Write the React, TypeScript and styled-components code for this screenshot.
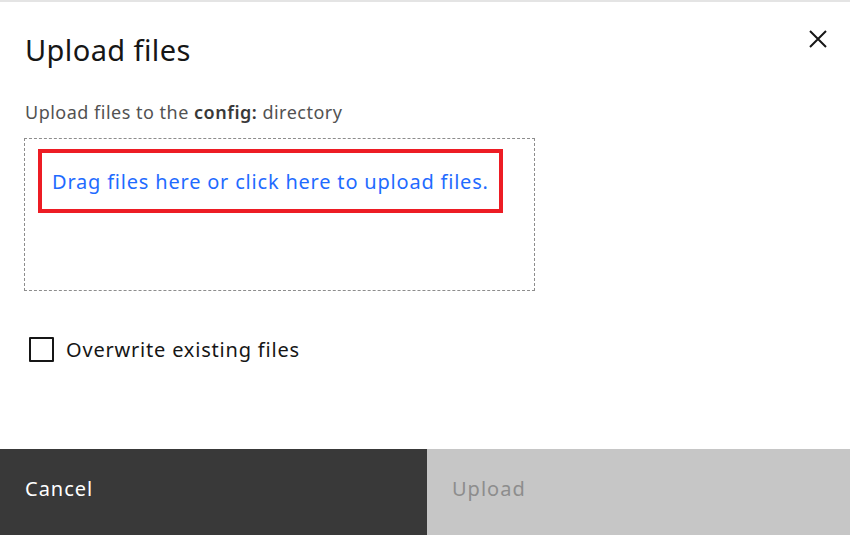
import styled, { createGlobalStyle } from "styled-components";

const GlobalStyle = createGlobalStyle`
  html, body {
    margin: 0;
    padding: 0;
    background: #ffffff;
  }
  body {
    font-family: "Noto Sans", "Open Sans", sans-serif;
  }
`;

const Modal = styled.div`
  width: 850px;
  height: 535px;
  box-sizing: border-box;
  border-top: 2px solid #e4e4e4;
  display: flex;
  flex-direction: column;
  background: #ffffff;
`;

const Header = styled.div`
  display: flex;
  justify-content: space-between;
  align-items: flex-start;
  padding: 28px 20px 0 25px;
`;

const Title = styled.h2`
  margin: 0;
  font-size: 29px;
  line-height: 40px;
  font-weight: 400;
  letter-spacing: 0.4px;
  color: #161616;
`;

const CloseButton = styled.button`
  border: none;
  background: none;
  padding: 0;
  margin-top: -3px;
  width: 24px;
  height: 24px;
  display: flex;
  align-items: center;
  justify-content: center;
  cursor: pointer;
`;

const Body = styled.div`
  flex: 1;
  padding: 0 25px 0 24px;
  display: flex;
  flex-direction: column;
`;

const Description = styled.p`
  margin: 30px 0 0 1px;
  font-size: 18px;
  line-height: 24px;
  letter-spacing: 0.5px;
  color: #525252;
  strong {
    font-weight: 600;
    color: #393939;
  }
`;

const DropZone = styled.div`
  margin-top: 14px;
  width: 511px;
  height: 153px;
  box-sizing: border-box;
  border: 1px dashed #8d8d8d;
  padding: 10px 0 0 13px;
`;

const Highlight = styled.div`
  width: 465px;
  height: 64px;
  box-sizing: border-box;
  border: 4px solid #ed1c24;
  display: flex;
  align-items: center;
  padding-left: 10px;
`;

const UploadLink = styled.span`
  font-size: 20px;
  letter-spacing: 0.8px;
  color: #1f6bff;
  cursor: pointer;
  white-space: nowrap;
`;

const CheckboxRow = styled.label`
  margin: 45px 0 0 5px;
  display: flex;
  align-items: center;
  gap: 12px;
  cursor: pointer;
`;

const Box = styled.span`
  width: 25px;
  height: 25px;
  box-sizing: border-box;
  border: 2px solid #161616;
  border-radius: 1px;
`;

const CheckLabel = styled.span`
  font-size: 20px;
  letter-spacing: 0.8px;
  color: #161616;
`;

const Footer = styled.div`
  height: 86px;
  display: grid;
  grid-template-columns: 427px 1fr;
`;

const FooterButton = styled.button<{ $primary?: boolean }>`
  border: none;
  margin: 0;
  padding: 28px 25px 0;
  text-align: left;
  align-self: stretch;
  display: flex;
  align-items: flex-start;
  font-family: inherit;
  font-size: 20px;
  line-height: 24px;
  letter-spacing: 1px;
  background: ${(p) => (p.$primary ? "#c6c6c6" : "#393939")};
  color: ${(p) => (p.$primary ? "#8d8d8d" : "#ffffff")};
  cursor: ${(p) => (p.$primary ? "not-allowed" : "pointer")};
`;

const App = () => {
  return (
    <>
      <GlobalStyle />
      <Modal>
        <Header>
          <Title>Upload files</Title>
          <CloseButton aria-label="Close">
            <svg width="22" height="22" viewBox="0 0 22 22">
              <path
                d="M3 3 L19 19 M19 3 L3 19"
                stroke="#161616"
                strokeWidth="2"
                fill="none"
              />
            </svg>
          </CloseButton>
        </Header>
        <Body>
          <Description>
            Upload files to the <strong>config:</strong> directory
          </Description>
          <DropZone>
            <Highlight>
              <UploadLink>Drag files here or click here to upload files.</UploadLink>
            </Highlight>
          </DropZone>
          <CheckboxRow>
            <Box />
            <CheckLabel>Overwrite existing files</CheckLabel>
          </CheckboxRow>
        </Body>
        <Footer>
          <FooterButton>Cancel</FooterButton>
          <FooterButton $primary disabled>
            Upload
          </FooterButton>
        </Footer>
      </Modal>
    </>
  );
};

export default App;
